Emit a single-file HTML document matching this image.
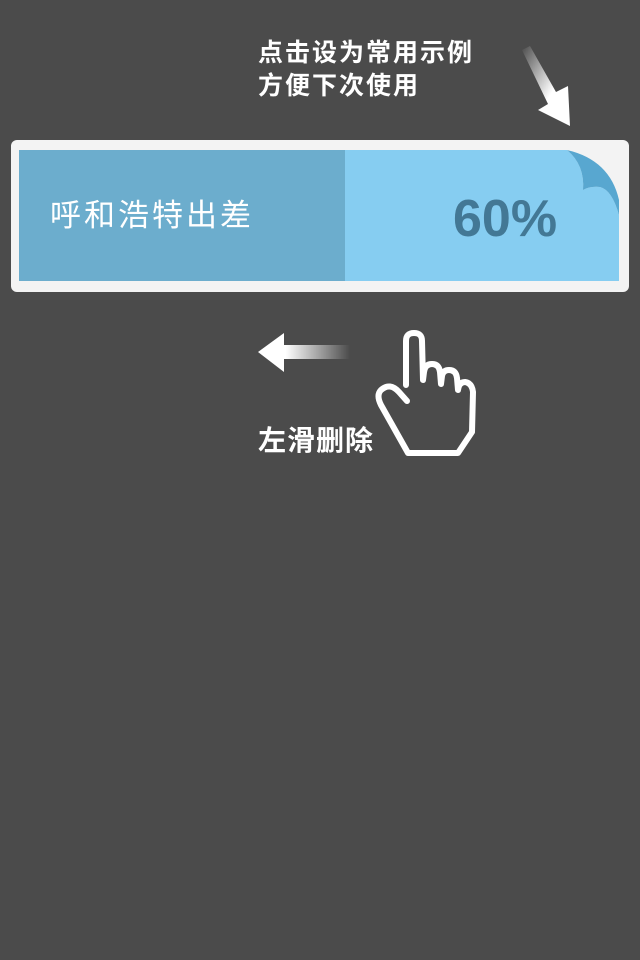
<!DOCTYPE html>
<html><head><meta charset="utf-8"><style>
html,body{margin:0;padding:0;width:640px;height:960px;background:#4b4b4b;overflow:hidden;font-family:"Liberation Sans","Noto Sans CJK SC",sans-serif;}
.t{position:absolute;color:#fff;font-weight:bold;}
</style></head><body>
<div class="t" style="left:258px;top:37px;font-size:25px;line-height:33px;letter-spacing:2px;">点击设为常用示例<br>方便下次使用</div>
<div style="position:absolute;left:11px;top:140px;width:618px;height:152px;background:#f3f3f3;border-radius:6px;"></div>
<div style="position:absolute;left:19px;top:150px;width:326px;height:131px;background:#6cadcd;"></div>
<div style="position:absolute;left:345px;top:150px;width:274px;height:131px;background:#86cdf1;"></div>
<svg style="position:absolute;left:0;top:0" width="640" height="960">
<defs>
<linearGradient id="g1" x1="0" y1="0" x2="1" y2="1"><stop offset="0" stop-color="#fff" stop-opacity="0"/><stop offset="0.6" stop-color="#fff"/></linearGradient>
<linearGradient id="g2" x1="1" y1="0" x2="0" y2="0"><stop offset="0" stop-color="#fff" stop-opacity="0"/><stop offset="0.7" stop-color="#fff"/></linearGradient>
</defs>
<path d="M567,150 L619,150 L619,215 Q612,190 600,187 Q590,186 583,190 Q585,165 567,150 Z" fill="#f3f3f3"/>
<path d="M567,150 Q585,165 583,190 Q590,186 600,187 Q612,190 619,215 L619,200 Q610,160 567,150 Z" fill="#58a7d0"/>
<path d="M522,50 L530,46 L556,92 L568,86 L570,126 L538,110 L548,104 Z" fill="url(#g1)"/>
<path d="M258,352 L284,333 L284,345 L350,345 L350,359 L284,359 L284,372 Z" fill="url(#g2)"/>
<path d="M406,385 L406,341 Q406,333 414,333 Q422,333 422,341 L423,380 L424,372 Q425,364 432,364 Q439,364 440,372 L441,384 L442,376 Q443,370 449,370 Q456,370 457,378 L458,390 Q459,382 465,382 Q472,383 473,392 L472,432 L458,453 L408,453 L381,405 Q376,395 381,390 Q390,382 399,392 L407,401" fill="none" stroke="#fff" stroke-width="6" stroke-linejoin="round" stroke-linecap="round"/>
</svg>
<div style="position:absolute;left:50px;top:196px;color:#fff;font-size:31px;line-height:40px;letter-spacing:3px;">呼和浩特出差</div>
<div style="position:absolute;left:453px;top:189px;color:#437895;font-size:52px;font-weight:bold;line-height:60px;">60%</div>
<div class="t" style="left:258px;top:424px;font-size:28px;line-height:34px;letter-spacing:1px;">左滑删除</div>
</body></html>
